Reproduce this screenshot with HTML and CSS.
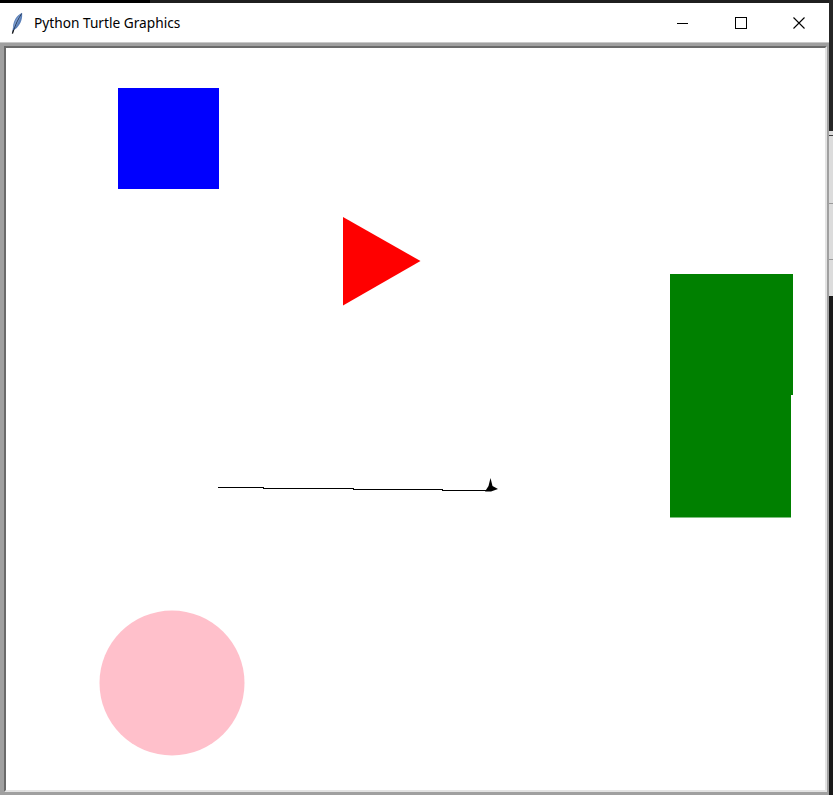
FILE: index.html
```html
<!DOCTYPE html>
<html>
<head>
<meta charset="utf-8">
<title>Python Turtle Graphics</title>
<link rel="stylesheet" href="styles.css">
</head>
<body>
<div class="screen">
  <div class="window">
    <div class="topedge"><div class="topedge-left"></div></div>
    <div class="titlebar">
      <div class="title-left">
        <svg class="feather" width="12" height="22" viewBox="0 0 12 22">
          <path d="M1.2 21.5 L2 15 C2.5 9 5.5 3.5 11 0.8 C11.8 6 10 12 5.8 16 L3 18 Z" fill="#5a7fb8"/>
          <path d="M2.2 16 C3 10 6 5 10.5 1.5 C9.5 6 7.5 11 3.5 16 Z" fill="#7e9fd0"/>
          <path d="M2.6 18.5 C4.5 12.5 7.2 7 10.6 1.6" stroke="#1f3355" stroke-width="0.9" fill="none"/>
          <path d="M1.4 21.6 L2.6 18" stroke="#111" stroke-width="1.3"/>
        </svg>
        <span class="title-text">Python Turtle Graphics</span>
      </div>
      <div class="controls">
        <div class="ctl">
          <svg width="12" height="12" viewBox="0 0 12 12"><path d="M0 6.5 H11" stroke="#000" stroke-width="1" shape-rendering="crispEdges"/></svg>
        </div>
        <div class="ctl">
          <svg width="12" height="12" viewBox="0 0 12 12"><rect x="0.5" y="0.5" width="11" height="11" stroke="#000" stroke-width="1" fill="none"/></svg>
        </div>
        <div class="ctl">
          <svg width="12" height="12" viewBox="0 0 12 12"><path d="M0.5 0.5 L11.5 11.5 M11.5 0.5 L0.5 11.5" stroke="#000" stroke-width="1.1"/></svg>
        </div>
      </div>
    </div>
    <div class="frame">
      <div class="canvas">
        <svg class="drawing" width="819" height="742" viewBox="6 48 819 742">
          <rect x="118" y="88" width="101" height="101" fill="#0000ff"/>
          <polygon points="343,217 420.5,261 343,305.5" fill="#ff0000"/>
          <polygon points="670,274 793,274 793,395 791,395 791,517.5 670,517.5" fill="#008000"/>
          <polyline points="218,487.5 263,487.5 263,488.5 353,488.5 353,489.5 442,489.5 442,490.5 490,490.5" fill="none" stroke="#000" stroke-width="1" shape-rendering="crispEdges"/>
          <polygon points="485,491.5 488.5,486 490.5,478 492.5,486 498,489 491,491.5" fill="#000"/>
          <circle cx="172" cy="683" r="72.5" fill="#ffc0cb"/>
        </svg>
      </div>
    </div>
  </div>
  <div class="side">
    <div class="side-top"></div>
    <div class="side-mid"><div class="tick t1"></div><div class="tick t2"></div><div class="tick t3"></div></div>
    <div class="side-bottom"></div>
  </div>
</div>
</body>
</html>
```
FILE: styles.css
```css
html, body {
  margin: 0;
  padding: 0;
  background: #1c1c1c;
}
.screen {
  display: flex;
  width: 833px;
  height: 795px;
  overflow: hidden;
}
.window {
  width: 829px;
  height: 795px;
  display: flex;
  flex-direction: column;
}
.topedge {
  height: 3px;
  background: #1f1f1f;
  display: flex;
}
.topedge-left {
  width: 150px;
  background: #000;
}
.titlebar {
  height: 39px;
  background: #ffffff;
  display: flex;
  align-items: center;
  justify-content: space-between;
}
.title-left {
  display: flex;
  align-items: center;
  padding-left: 11px;
}
.feather {
  display: block;
}
.title-text {
  margin-left: 11px;
  font-family: "Noto Sans", "Open Sans", sans-serif;
  font-size: 13.7px;
  color: #000;
}
.controls {
  display: flex;
  height: 39px;
  padding-right: 1px;
}
.ctl {
  width: 58px;
  height: 39px;
  display: flex;
  align-items: center;
  justify-content: center;
}
.ctl svg {
  display: block;
}
.frame {
  flex: 1;
  background: #a0a0a0;
  padding: 3px 2px 3px 4px;
  display: flex;
  border-top: 1px solid #c8c8c8;
}
.canvas {
  flex: 1;
  background: #ffffff;
  border-top: 2px solid #6a6a6a;
  border-left: 2px solid #6a6a6a;
  border-right: 2px solid #e3e3e3;
  border-bottom: 2px solid #e3e3e3;
  overflow: hidden;
}
.drawing {
  display: block;
}
.side {
  width: 4px;
  height: 795px;
  display: flex;
  flex-direction: column;
}
.side-top {
  height: 131px;
  background: #262626;
}
.side-mid {
  height: 165px;
  background: #dcdcdc;
  display: flex;
  flex-direction: column;
}
.tick {
  height: 1px;
  background: #9a9a9a;
}
.t1 { margin-top: 4px; background: #3a3a3a; }
.t2 { margin-top: 67px; }
.t3 { margin-top: 55px; }
.side-bottom {
  flex: 1;
  background: #1a1a1a;
}
```
